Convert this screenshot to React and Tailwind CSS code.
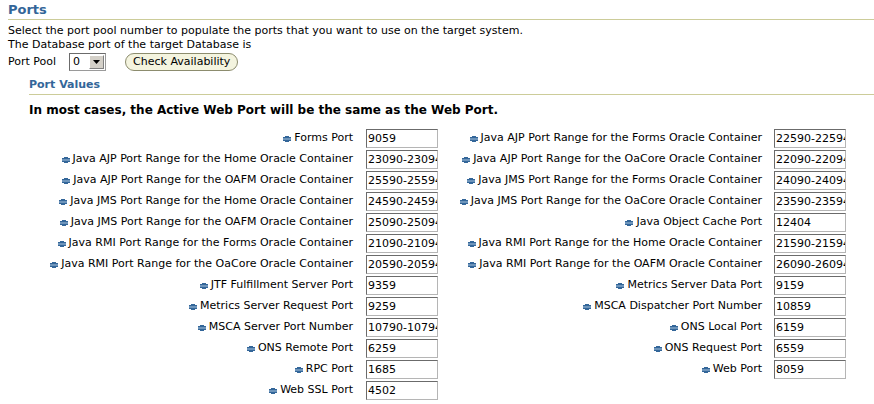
import React from "react";

const left = [
  ["Forms Port", "9059"],
  ["Java AJP Port Range for the Home Oracle Container", "23090-23094"],
  ["Java AJP Port Range for the OAFM Oracle Container", "25590-25594"],
  ["Java JMS Port Range for the Home Oracle Container", "24590-24594"],
  ["Java JMS Port Range for the OAFM Oracle Container", "25090-25094"],
  ["Java RMI Port Range for the Forms Oracle Container", "21090-21094"],
  ["Java RMI Port Range for the OaCore Oracle Container", "20590-20594"],
  ["JTF Fulfillment Server Port", "9359"],
  ["Metrics Server Request Port", "9259"],
  ["MSCA Server Port Number", "10790-10794"],
  ["ONS Remote Port", "6259"],
  ["RPC Port", "1685"],
  ["Web SSL Port", "4502"],
];
const right = [
  ["Java AJP Port Range for the Forms Oracle Container", "22590-22594"],
  ["Java AJP Port Range for the OaCore Oracle Container", "22090-22094"],
  ["Java JMS Port Range for the Forms Oracle Container", "24090-24094"],
  ["Java JMS Port Range for the OaCore Oracle Container", "23590-23594"],
  ["Java Object Cache Port", "12404"],
  ["Java RMI Port Range for the Home Oracle Container", "21590-21594"],
  ["Java RMI Port Range for the OAFM Oracle Container", "26090-26094"],
  ["Metrics Server Data Port", "9159"],
  ["MSCA Dispatcher Port Number", "10859"],
  ["ONS Local Port", "6159"],
  ["ONS Request Port", "6559"],
  ["Web Port", "8059"],
];

function Mark() {
  return (
    <svg width="8" height="6" viewBox="0 0 8 6" className="mr-[3px] shrink-0">
      <rect x="0" y="1" width="8" height="4" fill="#336699" />
      <rect x="2" y="0" width="4" height="6" fill="#336699" />
      <rect x="0" y="2.5" width="8" height="1" fill="#aac4dd" />
    </svg>
  );
}

function Label({ text, pr }) {
  return (
    <div className={`h-[21px] flex items-center justify-end ${pr}`}>
      <Mark />
      <span className="whitespace-nowrap">{text}</span>
    </div>
  );
}

function Input({ value }) {
  return (
    <div className="h-[21px] flex items-center">
      <div className="w-[72px] h-[19px] border border-[#b5b5b5] border-t-[#6b6b6b] border-l-[#6b6b6b] bg-white overflow-hidden whitespace-nowrap leading-[17px] pl-[1px]">
        {value}
      </div>
    </div>
  );
}

export default function App() {
  const rows = [];
  for (let i = 0; i < left.length; i++) {
    rows.push(<Label key={"l" + i} text={left[i][0]} pr="pr-[13px]" />);
    rows.push(<Input key={"li" + i} value={left[i][1]} />);
    if (right[i]) {
      rows.push(<Label key={"r" + i} text={right[i][0]} pr="pr-[12px]" />);
      rows.push(<Input key={"ri" + i} value={right[i][1]} />);
    } else {
      rows.push(<div key={"r" + i} />);
      rows.push(<div key={"ri" + i} />);
    }
  }
  return (
    <div className="w-[874px] h-[404px] overflow-hidden bg-white text-[11px] text-black pl-[8px] pt-[2px]" style={{ fontFamily: '"DejaVu Sans", sans-serif' }}>
      <div className="text-[13px] font-bold text-[#336699] leading-[16px]">Ports</div>
      <div className="h-px bg-[#cccc99] mt-[1px] mb-[4px]" />
      <div className="leading-[14px]">Select the port pool number to populate the ports that you want to use on the target system.</div>
      <div className="leading-[14px]">The Database port of the target Database is</div>
      <div className="flex items-center h-[20px]">
        <span>Port Pool</span>
        <div className="ml-[13px] w-[37px] h-[18px] border border-[#9a9a9a] border-t-[#6b6b6b] border-l-[#6b6b6b] flex items-center justify-between bg-white">
          <span className="pl-[3px]">0</span>
          <div className="w-[15px] h-[14px] mr-[1px] bg-[#d4d0c8] border border-white border-r-[#808080] border-b-[#808080] flex items-center justify-center">
            <svg width="7" height="4" viewBox="0 0 7 4"><path d="M0 0h7L3.5 4z" fill="#000" /></svg>
          </div>
        </div>
        <button className="ml-[19px] h-[18px] px-[7px] rounded-full border border-[#8c8c6e] bg-[#f4f4df] leading-[14px] text-[11px]" style={{ fontFamily: '"DejaVu Sans", sans-serif' }}>Check Availability</button>
      </div>
      <div className="ml-[21px] mt-[6px]">
        <div className="text-[11px] font-bold text-[#336699] leading-[14px]">Port Values</div>
        <div className="h-px bg-[#cccc99] mt-[2px]" />
        <div className="font-bold text-[12px] mt-[7px] leading-[16px]">In most cases, the Active Web Port will be the same as the Web Port.</div>
      </div>
      <div className="grid grid-cols-[358px_72px_336px_72px] mt-[10px]">{rows}</div>
    </div>
  );
}
